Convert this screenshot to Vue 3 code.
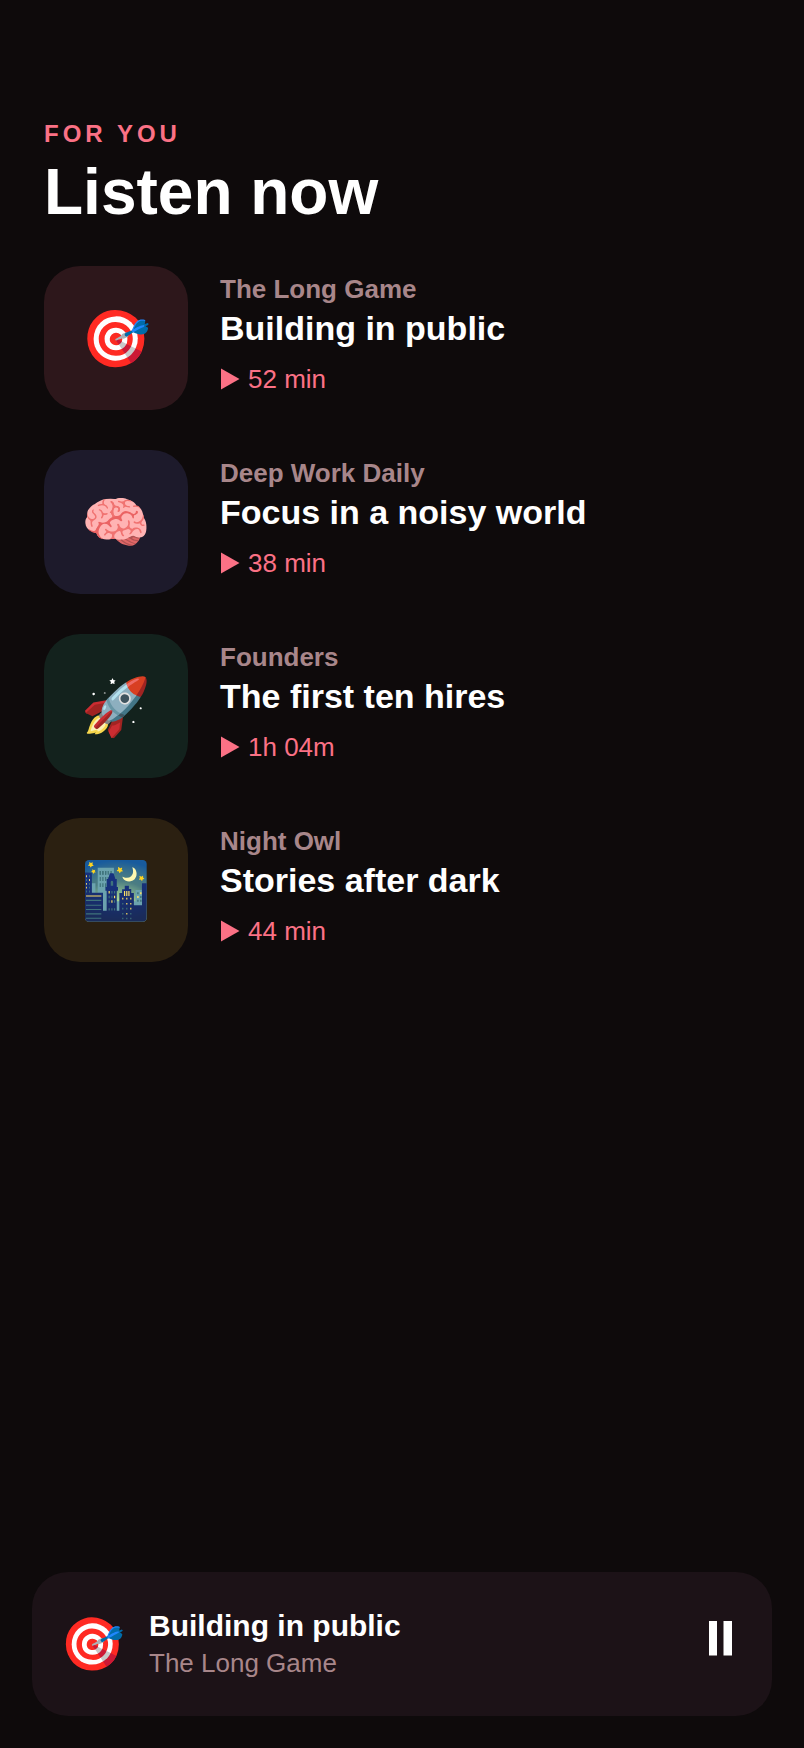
<template>
  <div class="page">
    <header class="header">
      <p class="eyebrow">FOR YOU</p>
      <h1 class="title">Listen now</h1>
    </header>
    <ul class="episodes">
      <li v-for="episode in episodes" :key="episode.title" class="episode">
        <div class="cover" :class="episode.theme">{{ episode.icon }}</div>
        <div class="episode-info">
          <p class="episode-show">{{ episode.show }}</p>
          <h2 class="episode-title">{{ episode.title }}</h2>
          <p class="episode-length">
            <svg width="20" height="22" viewBox="0 0 20 22" aria-hidden="true">
              <path d="M1 .5L19.5 11L1 21.5Z" fill="currentColor" />
            </svg>
            <span>{{ episode.length }}</span>
          </p>
        </div>
      </li>
    </ul>
    <footer class="player">
      <span class="player-icon">{{ playing.icon }}</span>
      <div class="player-info">
        <p class="player-title">{{ playing.title }}</p>
        <p class="player-show">{{ playing.show }}</p>
      </div>
      <button class="player-button" type="button" aria-label="Pause">
        <svg width="23" height="35" viewBox="0 0 23 35" aria-hidden="true">
          <path d="M0 0h8v34.5H0zM14.5 0H23v34.5h-8.5z" fill="currentColor" />
        </svg>
      </button>
    </footer>
  </div>
</template>

<script setup>
const episodes = [
  { show: 'The Long Game', title: 'Building in public', length: '52 min', icon: '🎯', theme: 'red' },
  { show: 'Deep Work Daily', title: 'Focus in a noisy world', length: '38 min', icon: '🧠', theme: 'blue' },
  { show: 'Founders', title: 'The first ten hires', length: '1h 04m', icon: '🚀', theme: 'green' },
  { show: 'Night Owl', title: 'Stories after dark', length: '44 min', icon: '🌃', theme: 'yellow' }
]
const playing = episodes[0]
</script>

<style>
body {
  background: #0e0a0b;
}
</style>

<style scoped>
.page {
  box-sizing: border-box;
  display: flex;
  flex-direction: column;
  min-height: 100vh;
  padding: 120px 32px 32px;
  background: #0e0a0b;
  color: #fff;
  font-family: "Liberation Sans", Arial, sans-serif;
}
p, h1, h2, ul {
  margin: 0;
  padding: 0;
}
.header {
  padding: 0 12px;
}
.eyebrow {
  color: #fb7185;
  font-size: 24px;
  line-height: 28px;
  font-weight: 700;
  letter-spacing: 4px;
}
.title {
  margin-top: 8px;
  font-size: 64px;
  line-height: 72px;
}
.episodes {
  display: flex;
  flex-direction: column;
  gap: 40px;
  padding: 38px 12px;
  list-style: none;
}
.episode {
  display: flex;
  align-items: center;
  gap: 32px;
}
.cover {
  box-sizing: border-box;
  display: flex;
  flex: none;
  align-items: center;
  justify-content: center;
  width: 144px;
  height: 144px;
  padding-top: 2px;
  border-radius: 36px;
  font-size: 56px;
}
.red {
  background: #2d171b;
}
.blue {
  background: #1d1a2b;
}
.green {
  background: #13221d;
}
.yellow {
  background: #2b2011;
}
.episode-info {
  padding-bottom: 8px;
}
.episode-show {
  color: #a8868a;
  font-size: 26px;
  line-height: 30px;
  font-weight: 700;
}
.episode-title {
  margin-top: 4px;
  font-size: 34px;
  line-height: 40px;
}
.episode-length {
  display: flex;
  align-items: center;
  gap: 8px;
  margin-top: 16px;
  color: #fb7185;
  font-size: 26px;
  line-height: 30px;
}
.player {
  display: flex;
  align-items: center;
  gap: 24px;
  margin-top: auto;
  padding: 36px 40px 36px 28px;
  border-radius: 36px;
  background: #1c1217;
}
.player-icon {
  font-size: 52px;
}
.player-info {
  flex: 1;
  padding-bottom: 2px;
}
.player-title {
  font-size: 30px;
  line-height: 36px;
  font-weight: 700;
}
.player-show {
  margin-top: 4px;
  color: #a8868a;
  font-size: 26px;
  line-height: 30px;
}
.player-button {
  padding: 0 0 12px;
  border: 0;
  background: none;
  color: #fff;
  cursor: pointer;
}
.player-button svg {
  display: block;
}
</style>
